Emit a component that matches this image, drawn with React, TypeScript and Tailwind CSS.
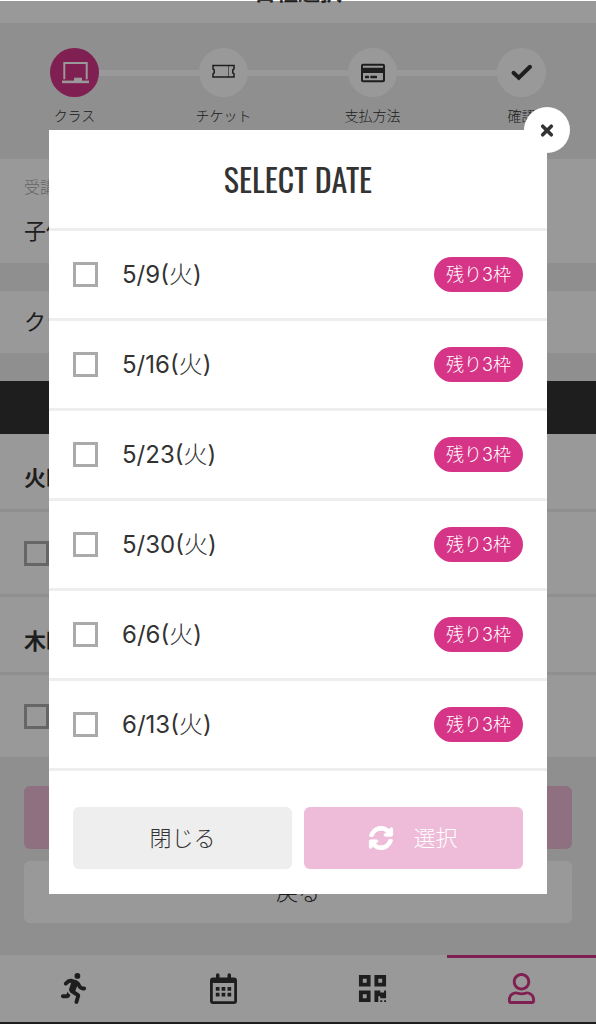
import { FaRegCreditCard, FaRegUser, FaQrcode, FaSyncAlt } from "react-icons/fa";
import { FaPersonRunning } from "react-icons/fa6";

const dates = ["5/9", "5/16", "5/23", "5/30", "6/6", "6/13"];

function BoardIcon() {
  return (
    <svg viewBox="0 0 28 24" className="h-6 w-7" fill="none" stroke="currentColor" strokeWidth="2">
      <path d="M3.300 18.200V2h22.400v16.200" />
      <path d="M1 20.900h27" strokeWidth="2.600" />
      <path d="M13 16.700h8v3.500h-8z" fill="currentColor" stroke="none" />
    </svg>
  );
}

function TicketIcon() {
  return (
    <svg viewBox="0 0 24 24" className="h-6 w-6" fill="none" stroke="currentColor" strokeWidth="1.500">
      <path d="M1 4.500h21v3.400l-1.200 1v3l1.200 1v3.200H1v-3.200l1.200-1v-3l-1.200-1z" />
      <path d="M16.500 5v11" strokeWidth=".6" />
    </svg>
  );
}

function CheckIcon() {
  return (
    <svg viewBox="0 0 24 24" className="h-6 w-6" fill="none" stroke="currentColor" strokeWidth="4" strokeLinecap="round">
      <path d="M3.500 11.800L8.800 16.800L20 5.800" />
    </svg>
  );
}

function CloseIcon() {
  return (
    <svg viewBox="0 0 20 20" className="h-5 w-5" fill="none" stroke="currentColor" strokeWidth="3.600" strokeLinecap="round">
      <path d="M5.700 6.200l8.600 8.600M14.300 6.200l-8.600 8.600" />
    </svg>
  );
}

function CalendarIcon() {
  return (
    <svg viewBox="0 0 28 32" className="h-8 w-7" fill="currentColor">
      <path d="M3.500 4.500H6V2a1.700 1.700 0 0 1 3.500 0v2.500h8V2a1.700 1.700 0 0 1 3.500 0v2.500h3A3 3 0 0 1 27 7.500v20.500a3 3 0 0 1-3 3H3a3 3 0 0 1-3-3V7.500a3 3 0 0 1 3-3zM2.800 10v18.200h21.400V10z" fillRule="evenodd" />
      <path d="M5.800 14h3.700v3.700H5.800zM11.600 14h3.700v3.700h-3.700zM17.500 14h3.700v3.700h-3.700zM5.800 19.800h3.700v3.700H5.800zM11.600 19.800h3.700v3.700h-3.700zM17.500 19.800h3.700v3.700h-3.700z" />
    </svg>
  );
}

const steps = [
  { label: "クラス", icon: <BoardIcon /> },
  { label: "チケット", icon: <TicketIcon /> },
  { label: "支払方法", icon: <FaRegCreditCard size={24} /> },
  { label: "確認", icon: <CheckIcon /> },
];

function DayGroup({ day }: { day: string }) {
  return (
    <section>
      <h2 className="flex h-[78px] items-center border-b-[3px] border-[#eee] px-6 pt-[14px] text-[22px] font-bold">{day}</h2>
      <label className="flex h-[85px] items-center border-b-[3px] border-[#eee] px-6">
        <input type="checkbox" aria-label={day} className="size-[25px] appearance-none border-[3px] border-[#aaa]" />
      </label>
    </section>
  );
}

export default function App() {
  return (
    <div className="relative min-h-screen overflow-hidden bg-[#eee] font-['Inter','Noto_Sans_CJK_JP',sans-serif] font-light text-[#333]">
      <header className="flex h-[23px] items-start justify-center bg-white">
        <h1 className="-mt-5 text-[22px] leading-6 font-bold">日程選択</h1>
      </header>

      <ol className="grid h-[136px] grid-cols-4 pt-[25px]">
        {steps.map((s, i) => (
          <li key={s.label} className="flex flex-col items-center">
            <div className="flex w-full items-center">
              <span className={i === 0 ? "h-[6px] flex-1" : "h-[6px] flex-1 bg-white"} />
              <span
                className={
                  i === 0
                    ? "flex size-[49px] items-center justify-center rounded-full bg-[#d63487] text-white"
                    : "flex size-[49px] items-center justify-center rounded-full bg-white"
                }
              >
                {s.icon}
              </span>
              <span className={i === 3 ? "h-[6px] flex-1" : "h-[6px] flex-1 bg-white"} />
            </div>
            <span className="mt-2 text-sm leading-[22px]">{s.label}</span>
          </li>
        ))}
      </ol>

      <section className="h-[104px] bg-white px-6 pt-4">
        <p className="text-base leading-6 text-[#aaa]">受講者</p>
        <p className="mt-4 text-[22px] leading-8 font-normal">子供</p>
      </section>
      <section className="mt-7 flex h-[62px] items-center bg-white px-6 text-[22px] font-normal">クラス</section>
      <div className="mt-7 h-[53px] bg-[#333]" />
      <div className="h-[324px] bg-white">
        <DayGroup day="火曜日" />
        <DayGroup day="木曜日" />
      </div>

      <div className="flex flex-col gap-3 px-6 pt-7 pb-8">
        <button className="h-[63px] rounded-md bg-[#eebbd8] text-[22px] text-white">次へ</button>
        <button className="h-[62px] rounded-md bg-white text-[22px]">戻る</button>
      </div>

      <nav className="grid h-[69px] grid-cols-4 border-b-2 border-[#333] bg-white">
        <a href="#lesson" aria-label="レッスン" className="flex items-center justify-center"><FaPersonRunning size={31} /></a>
        <a href="#calendar" aria-label="カレンダー" className="flex items-center justify-center"><CalendarIcon /></a>
        <a href="#qr" aria-label="QRコード" className="flex items-center justify-center"><FaQrcode size={31} /></a>
        <a href="#account" aria-label="アカウント" className="flex items-center justify-center border-t-[3px] border-[#d63487] pb-1 text-[#d63487]"><FaRegUser size={31} /></a>
      </nav>

      <div className="absolute inset-x-0 top-px bottom-0 bg-black/40 px-[49px] pt-[129px]">
        <div role="dialog" aria-modal="true" aria-labelledby="dialog-title" className="relative bg-white">
          <button aria-label="閉じる" className="absolute -top-[23px] -right-[23px] flex size-[46px] items-center justify-center rounded-full bg-white">
            <CloseIcon />
          </button>
          <h2 id="dialog-title" className="flex h-[101px] items-center justify-center border-b-[3px] border-[#eee] font-['Oswald','Liberation_Sans_Narrow',sans-serif] text-[32px] font-normal">
            SELECT DATE
          </h2>
          <ul>
            {dates.map((d) => (
              <li key={d} className="border-b-[3px] border-[#eee]">
                <label className="flex h-[87px] items-center px-6">
                  <input type="checkbox" className="size-[25px] appearance-none border-[3px] border-[#aaa]" />
                  <span className="ml-6 flex-1 text-2xl font-normal">
                    {d}(<span className="font-light">火</span>)
                  </span>
                  <span className="flex h-[35px] items-center rounded-full bg-[#d63487] px-3 text-lg text-white">残り3枠</span>
                </label>
              </li>
            ))}
          </ul>
          <div className="grid grid-cols-2 gap-3 px-6 pt-9 pb-[25px]">
            <button className="h-[62px] rounded-md bg-[#eee] text-[22px]">閉じる</button>
            <button className="flex h-[62px] items-center justify-center gap-5 rounded-md bg-[#eebbd8] text-[22px] text-white">
              <FaSyncAlt size={24} strokeWidth={20} stroke="currentColor" className="overflow-visible" />
              選択
            </button>
          </div>
        </div>
      </div>
    </div>
  );
}
